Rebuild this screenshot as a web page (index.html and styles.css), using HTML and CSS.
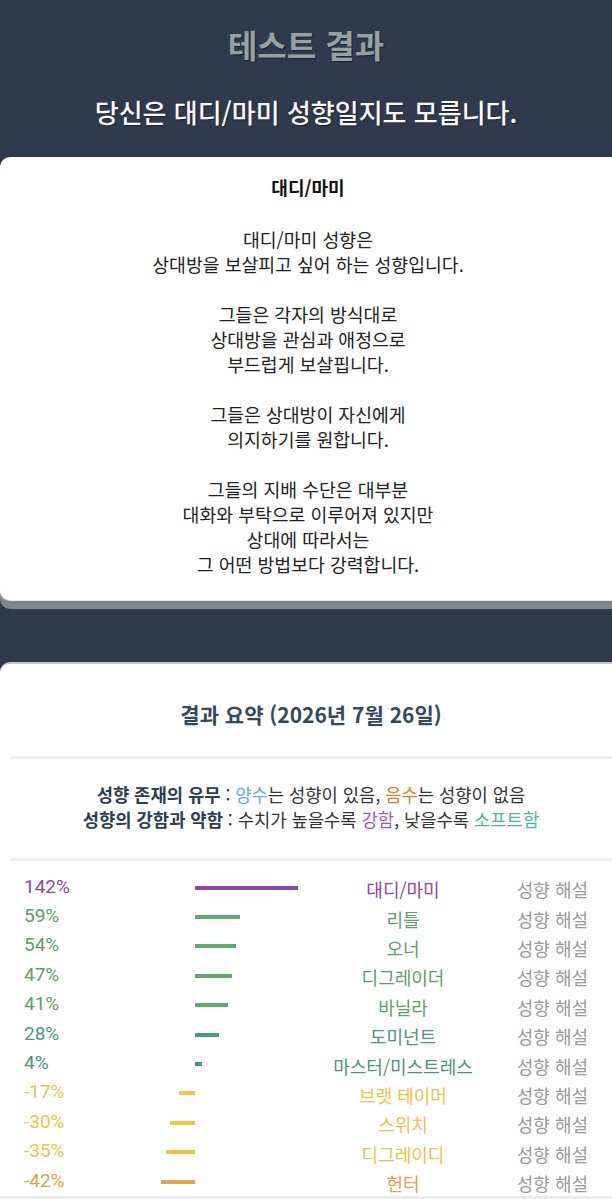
FILE: index.html
```html
<!DOCTYPE html>
<html lang="ko">
<head>
    <meta charset="UTF-8">
    <meta name="viewport" content="width=device-width, initial-scale=1.0">
    <title>테스트 결과</title>
    <link rel="stylesheet" href="styles.css">
</head>
<body>
    <!-- Result header -->
    <header class="hero">
        <h1 class="hero-title">테스트 결과</h1>
        <p class="hero-sub">당신은 대디/마미 성향일지도 모릅니다.</p>
    </header>

    <!-- Main type description -->
    <section class="card card-desc">
        <h3>대디/마미</h3>
        <p>대디/마미 성향은<br>상대방을 보살피고 싶어 하는 성향입니다.</p>
        <p>그들은 각자의 방식대로<br>상대방을 관심과 애정으로<br>부드럽게 보살핍니다.</p>
        <p>그들은 상대방이 자신에게<br>의지하기를 원합니다.</p>
        <p>그들의 지배 수단은 대부분<br>대화와 부탁으로 이루어져 있지만<br>상대에 따라서는<br>그 어떤 방법보다 강력합니다.</p>
    </section>

    <!-- Score summary -->
    <section class="card card-summary">
        <h2>결과 요약 (2026년 7월 26일)</h2>
        <hr>
        <div class="legend">
            <p><b>성향 존재의 유무</b> : <span class="c-plus">양수</span>는 성향이 있음, <span class="c-minus">음수</span>는 성향이 없음</p>
            <p><b>성향의 강함과 약함</b> : 수치가 높을수록 <span class="c-strong">강함</span>, 낮을수록 <span class="c-soft">소프트함</span></p>
        </div>
        <hr>
        <ul class="scores">
            <li class="row purple">
                <span class="pct">142%</span>
                <span class="neg"></span>
                <span class="pos"><i class="bar" style="width:103px"></i></span>
                <span class="name">대디/마미</span>
                <a class="more" href="#">성향 해설</a>
            </li>
            <li class="row green">
                <span class="pct">59%</span>
                <span class="neg"></span>
                <span class="pos"><i class="bar" style="width:45px"></i></span>
                <span class="name">리틀</span>
                <a class="more" href="#">성향 해설</a>
            </li>
            <li class="row green">
                <span class="pct">54%</span>
                <span class="neg"></span>
                <span class="pos"><i class="bar" style="width:41px"></i></span>
                <span class="name">오너</span>
                <a class="more" href="#">성향 해설</a>
            </li>
            <li class="row green">
                <span class="pct">47%</span>
                <span class="neg"></span>
                <span class="pos"><i class="bar" style="width:37px"></i></span>
                <span class="name">디그레이더</span>
                <a class="more" href="#">성향 해설</a>
            </li>
            <li class="row green">
                <span class="pct">41%</span>
                <span class="neg"></span>
                <span class="pos"><i class="bar" style="width:33px"></i></span>
                <span class="name">바닐라</span>
                <a class="more" href="#">성향 해설</a>
            </li>
            <li class="row teal">
                <span class="pct">28%</span>
                <span class="neg"></span>
                <span class="pos"><i class="bar" style="width:24px"></i></span>
                <span class="name">도미넌트</span>
                <a class="more" href="#">성향 해설</a>
            </li>
            <li class="row teal">
                <span class="pct">4%</span>
                <span class="neg"></span>
                <span class="pos"><i class="bar" style="width:7px"></i></span>
                <span class="name">마스터/미스트레스</span>
                <a class="more" href="#">성향 해설</a>
            </li>
            <li class="row yellow">
                <span class="pct">-17%</span>
                <span class="neg"><i class="bar" style="width:16px"></i></span>
                <span class="pos"></span>
                <span class="name">브랫 테이머</span>
                <a class="more" href="#">성향 해설</a>
            </li>
            <li class="row yellow">
                <span class="pct">-30%</span>
                <span class="neg"><i class="bar" style="width:25px"></i></span>
                <span class="pos"></span>
                <span class="name">스위치</span>
                <a class="more" href="#">성향 해설</a>
            </li>
            <li class="row yellow">
                <span class="pct">-35%</span>
                <span class="neg"><i class="bar" style="width:29px"></i></span>
                <span class="pos"></span>
                <span class="name">디그레이디</span>
                <a class="more" href="#">성향 해설</a>
            </li>
            <li class="row orange">
                <span class="pct">-42%</span>
                <span class="neg"><i class="bar" style="width:34px"></i></span>
                <span class="pos"></span>
                <span class="name">헌터</span>
                <a class="more" href="#">성향 해설</a>
            </li>
        </ul>
    </section>
</body>
</html>
```

FILE: styles.css
```css
/* General Styling */
body {
    font-family: 'Noto Sans CJK KR', 'Noto Sans', sans-serif;
    margin: 0;
    padding: 0;
    background: #2f3b4d;
    color: #222;
    text-align: center;
    overflow: hidden;
}

/* Header */
.hero {
    padding: 22px 0 28px;
}

.hero-title {
    margin: 0 0 29px;
    font-size: 32px;
    line-height: 44px;
    font-weight: bold;
    color: #95a2a3;
    text-shadow: 1px 1px 1px rgba(0, 0, 0, 0.45);
}

.hero-sub {
    margin: 0;
    font-size: 26px;
    line-height: 34px;
    font-weight: 500;
    color: #fafafa;
    text-shadow: 1px 1px 1px rgba(0, 0, 0, 0.4);
}

/* Cards */
.card {
    background: #fff;
    border-radius: 10px 0 0 10px;
    margin-right: -4px;
}

.card-desc {
    padding: 18px 20px 23.5px;
    margin-bottom: 62px;
    box-shadow: 0 1px 0 #e4e8e8, 0 9px 0 #7e8a89;
}

.card-desc h3 {
    margin: 0 0 27.5px;
    font-size: 18px;
    line-height: 24px;
    font-weight: bold;
    color: #111;
}

.card-desc p {
    margin: 0 0 25px;
    font-size: 18.3px;
    line-height: 25px;
}

.card-desc p:last-child {
    margin-bottom: 0;
}

/* Summary */
.card-summary {
    border-radius: 10px 0 0 0;
    border-top: 2px solid #c3c9cf;
    padding: 36px 4px 0 10px;
    min-height: 600px;
}

.card-summary h2 {
    margin: 0 0 28px;
    font-size: 21px;
    line-height: 28px;
    font-weight: bold;
    color: #34495e;
}

.card-summary hr {
    margin: 0;
    border: 0;
    border-top: 3px solid #eceef0;
}

.legend {
    padding: 23px 0 26px;
}

.legend p {
    margin: 0;
    font-size: 17.7px;
    line-height: 25px;
    color: #333;
}

.legend b {
    color: #2c3e50;
}

.c-plus { color: #5dade2; }
.c-minus { color: #e67e22; }
.c-strong { color: #9b59b6; }
.c-soft { color: #48b89a; }

/* Score rows */
.scores {
    list-style: none;
    margin: 0 -4px 0 -10px;
    padding: 12px 0 0;
    border-bottom: 3px solid #e8eaec;
}

.row {
    display: grid;
    grid-template-columns: 123px 48px 108px 200px 1fr;
    align-items: center;
    height: 29.4px;
    padding: 0 28px 0 24px;
    font-size: 18px;
}

.pct {
    text-align: left;
    font-family: 'Roboto', sans-serif;
    font-size: 19px;
    margin-top: -3px;
}

.neg {
    display: flex;
    justify-content: flex-end;
}

.pos {
    display: flex;
    justify-content: flex-start;
}

.bar {
    display: block;
    height: 4px;
}

.name {
    white-space: nowrap;
    margin-top: 3px;
}

.more {
    text-align: right;
    color: #9a9a9a;
    text-decoration: none;
    margin-top: 3px;
}

/* Row colours */
.purple .pct, .purple .name { color: #8e44ad; }
.purple .bar { background: #8e44ad; }
.green .pct, .green .name { color: #5aa06b; }
.green .bar { background: #5cad6c; }
.teal .pct, .teal .name { color: #4a9680; }
.teal .bar { background: #4a9a82; }
.yellow .pct, .yellow .name { color: #f0c244; }
.yellow .bar { background: #f2c53d; }
.orange .pct, .orange .name { color: #e3a03e; }
.orange .bar { background: #e5a445; }
```
